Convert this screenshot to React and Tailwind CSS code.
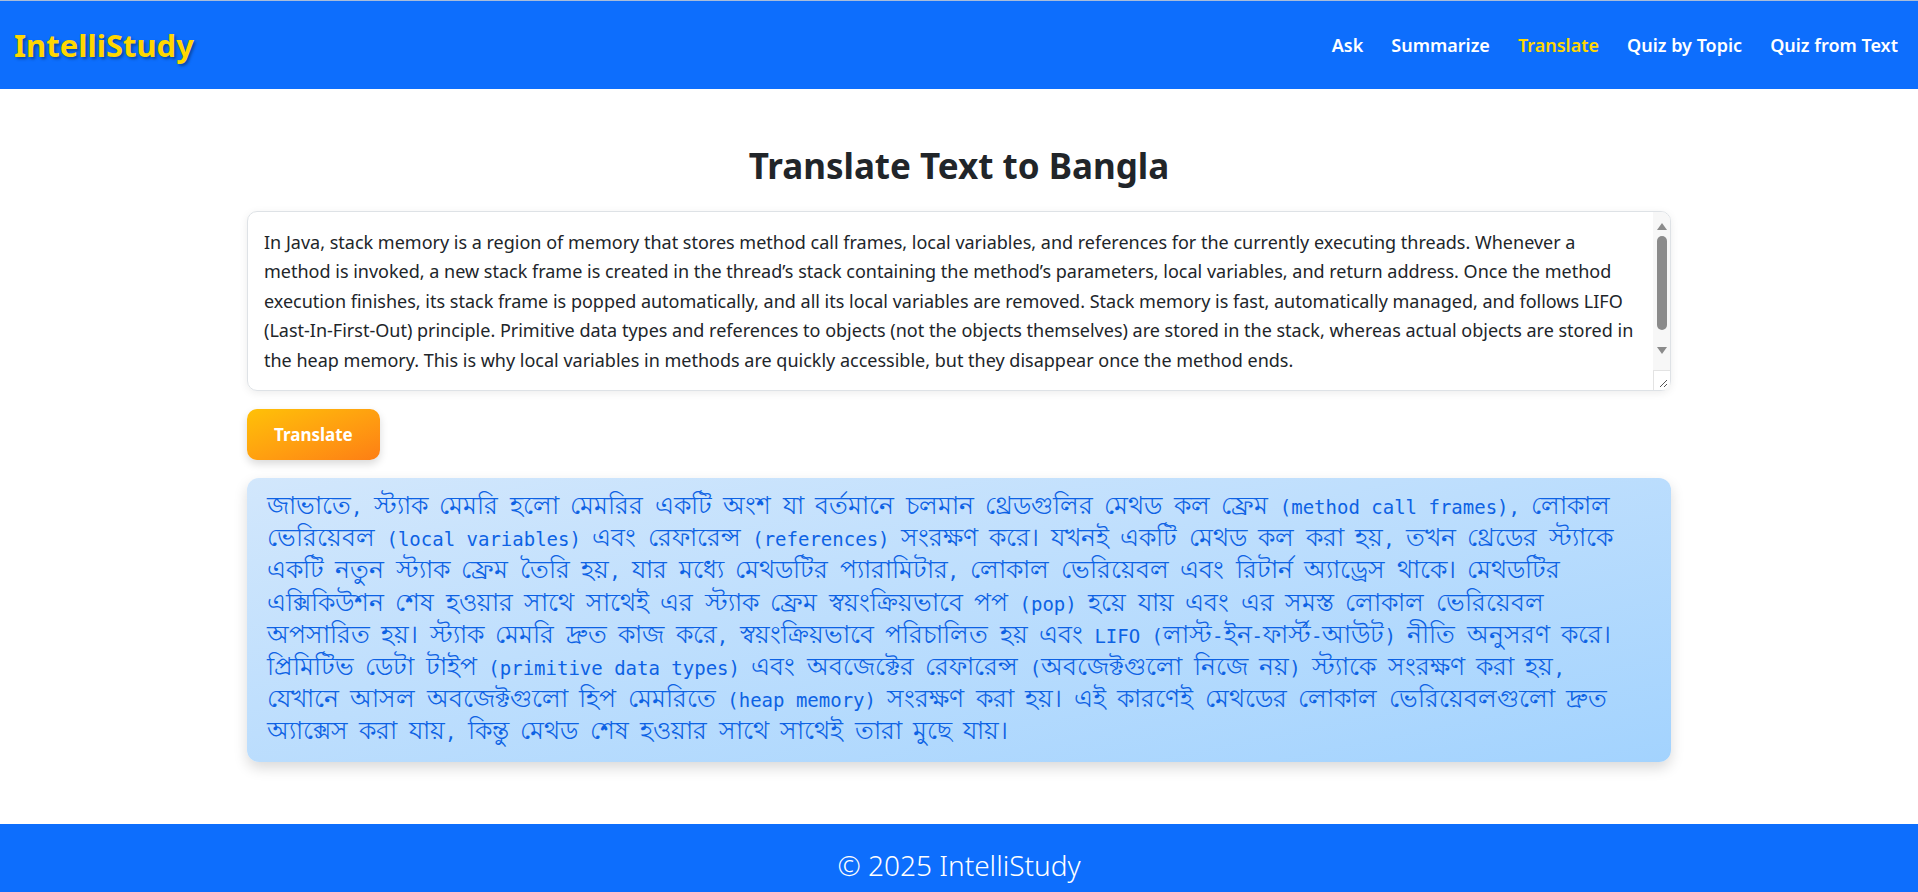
import React, { useState } from "react";

const SOURCE_TEXT =
  "In Java, stack memory is a region of memory that stores method call frames, local variables, and references for the currently executing threads. Whenever a method is invoked, a new stack frame is created in the thread’s stack containing the method’s parameters, local variables, and return address. Once the method execution finishes, its stack frame is popped automatically, and all its local variables are removed. Stack memory is fast, automatically managed, and follows LIFO (Last-In-First-Out) principle. Primitive data types and references to objects (not the objects themselves) are stored in the stack, whereas actual objects are stored in the heap memory. This is why local variables in methods are quickly accessible, but they disappear once the method ends.";

// kept in the same line breaks as the rendered result
const TRANSLATED_LINES = [
  "জাভাতে, স্ট্যাক মেমরি হলো মেমরির একটি অংশ যা বর্তমানে চলমান থ্রেডগুলির মেথড কল ফ্রেম (method call frames), লোকাল",
  "ভেরিয়েবল (local variables) এবং রেফারেন্স (references) সংরক্ষণ করে। যখনই একটি মেথড কল করা হয়, তখন থ্রেডের স্ট্যাকে",
  "একটি নতুন স্ট্যাক ফ্রেম তৈরি হয়, যার মধ্যে মেথডটির প্যারামিটার, লোকাল ভেরিয়েবল এবং রিটার্ন অ্যাড্রেস থাকে। মেথডটির",
  "এক্সিকিউশন শেষ হওয়ার সাথে সাথেই এর স্ট্যাক ফ্রেম স্বয়ংক্রিয়ভাবে পপ (pop) হয়ে যায় এবং এর সমস্ত লোকাল ভেরিয়েবল",
  "অপসারিত হয়। স্ট্যাক মেমরি দ্রুত কাজ করে, স্বয়ংক্রিয়ভাবে পরিচালিত হয় এবং LIFO (লাস্ট-ইন-ফার্স্ট-আউট) নীতি অনুসরণ করে।",
  "প্রিমিটিভ ডেটা টাইপ (primitive data types) এবং অবজেক্টের রেফারেন্স (অবজেক্টগুলো নিজে নয়) স্ট্যাকে সংরক্ষণ করা হয়,",
  "যেখানে আসল অবজেক্টগুলো হিপ মেমরিতে (heap memory) সংরক্ষণ করা হয়। এই কারণেই মেথডের লোকাল ভেরিয়েবলগুলো দ্রুত",
  "অ্যাক্সেস করা যায়, কিন্তু মেথড শেষ হওয়ার সাথে সাথেই তারা মুছে যায়।",
];

const navLinks = ["Ask", "Summarize", "Translate", "Quiz by Topic", "Quiz from Text"];

// bangla runs render in a larger fallback font than the mono latin parts
const BANGLA_RUN = /([\u0980-\u09FF\u0964\u0965\u200C\u200D]+)/;

const Navbar = ({ active }) => (
  <nav className="h-[89px] border-t border-[#a9bcd9] bg-[#0d6efd] flex items-center justify-between pl-[14px] pr-5">
    <a
      href="#"
      className="text-[31px] font-bold text-[#ffd700] [text-shadow:2px_2px_3px_rgba(0,0,0,0.35)]"
    >
      IntelliStudy
    </a>
    <div className="flex items-center gap-7">
      {navLinks.map((link) => (
        <a
          key={link}
          href="#"
          className={`text-[18px] font-semibold ${
            link === active ? "text-[#ffd700]" : "text-white"
          }`}
        >
          {link}
        </a>
      ))}
    </div>
  </nav>
);

const FakeScrollbar = () => (
  <div className="absolute top-[1px] right-[1px] bottom-[1px] w-[17px] flex flex-col bg-[#f7f7f7] rounded-tr-[9px]">
    <div className="h-[24px] flex items-end justify-center pb-[6px]">
      <svg width="10" height="7" viewBox="0 0 10 7">
        <polygon points="5,0 10,7 0,7" fill="#8b8b8b" />
      </svg>
    </div>
    <div className="h-[94px] flex justify-center">
      <div className="w-[10px] h-full rounded-full bg-[#8b8b8b]" />
    </div>
    <div className="flex-1 flex items-center justify-center">
      <svg width="10" height="7" viewBox="0 0 10 7">
        <polygon points="0,0 10,0 5,7" fill="#8b8b8b" />
      </svg>
    </div>
    <div className="h-[20px] bg-white border-t border-l border-[#e3e3e3] flex items-end justify-end p-[2px] rounded-br-[9px]">
      <svg width="9" height="9" viewBox="0 0 9 9">
        <line x1="1" y1="8" x2="8" y2="1" stroke="#555" strokeWidth="1" />
        <line x1="5" y1="8" x2="8" y2="5" stroke="#555" strokeWidth="1" />
      </svg>
    </div>
  </div>
);

const TranslatedLine = ({ line }) => (
  <span className="block">
    {line.split(BANGLA_RUN).map((part, i) =>
      i % 2 === 1 ? (
        <span key={i} className="text-[25px] leading-[22px] font-medium">
          {part}
        </span>
      ) : (
        <span key={i}>{part}</span>
      )
    )}
  </span>
);

export default function App() {
  const [text, setText] = useState(SOURCE_TEXT);

  return (
    <div className="min-h-screen flex flex-col bg-white font-['Segoe_UI','Noto_Sans',sans-serif]">
      <Navbar active="Translate" />

      <main className="flex-1 pt-[56px] pb-[62px]">
        <div className="max-w-[1424px] mx-auto">
          <h1 className="text-center text-[35px] leading-[42px] font-bold text-[#212529] mb-[24px]">
            Translate Text to Bangla
          </h1>

          <div className="relative">
            <textarea
              value={text}
              onChange={(e) => setText(e.target.value)}
              className="block w-full h-[180px] pl-4 pr-[33px] py-4 rounded-[10px] border border-[#dee2e6] shadow-[0_2px_8px_rgba(0,0,0,0.08)] text-[18px] leading-[29.4px] text-[#212529] outline-none resize-none [scrollbar-width:none]"
            />
            <FakeScrollbar />
          </div>

          <button className="mt-[18px] h-[51px] px-[27px] rounded-[10px] bg-gradient-to-br from-[#ffc107] to-[#fd7e14] text-white text-[17px] font-bold shadow-[0_4px_8px_rgba(0,0,0,0.15)]">
            Translate
          </button>

          <div className="mt-[18px] rounded-[12px] bg-gradient-to-br from-[#d2e7fc] to-[#a3d3fe] px-5 py-[13px] shadow-[0_6px_14px_rgba(0,0,0,0.15)]">
            <p className="text-[#0d62e4] text-[19px] leading-[32.2px] font-['DejaVu_Sans_Mono','Liberation_Mono',monospace]">
              {TRANSLATED_LINES.map((line, i) => (
                <TranslatedLine key={i} line={line} />
              ))}
            </p>
          </div>
        </div>
      </main>

      <footer className="bg-[#0d6efd] py-5 text-center">
        <p className="text-white text-[28px] leading-[42px] font-light">© 2025 IntelliStudy</p>
      </footer>
    </div>
  );
}
